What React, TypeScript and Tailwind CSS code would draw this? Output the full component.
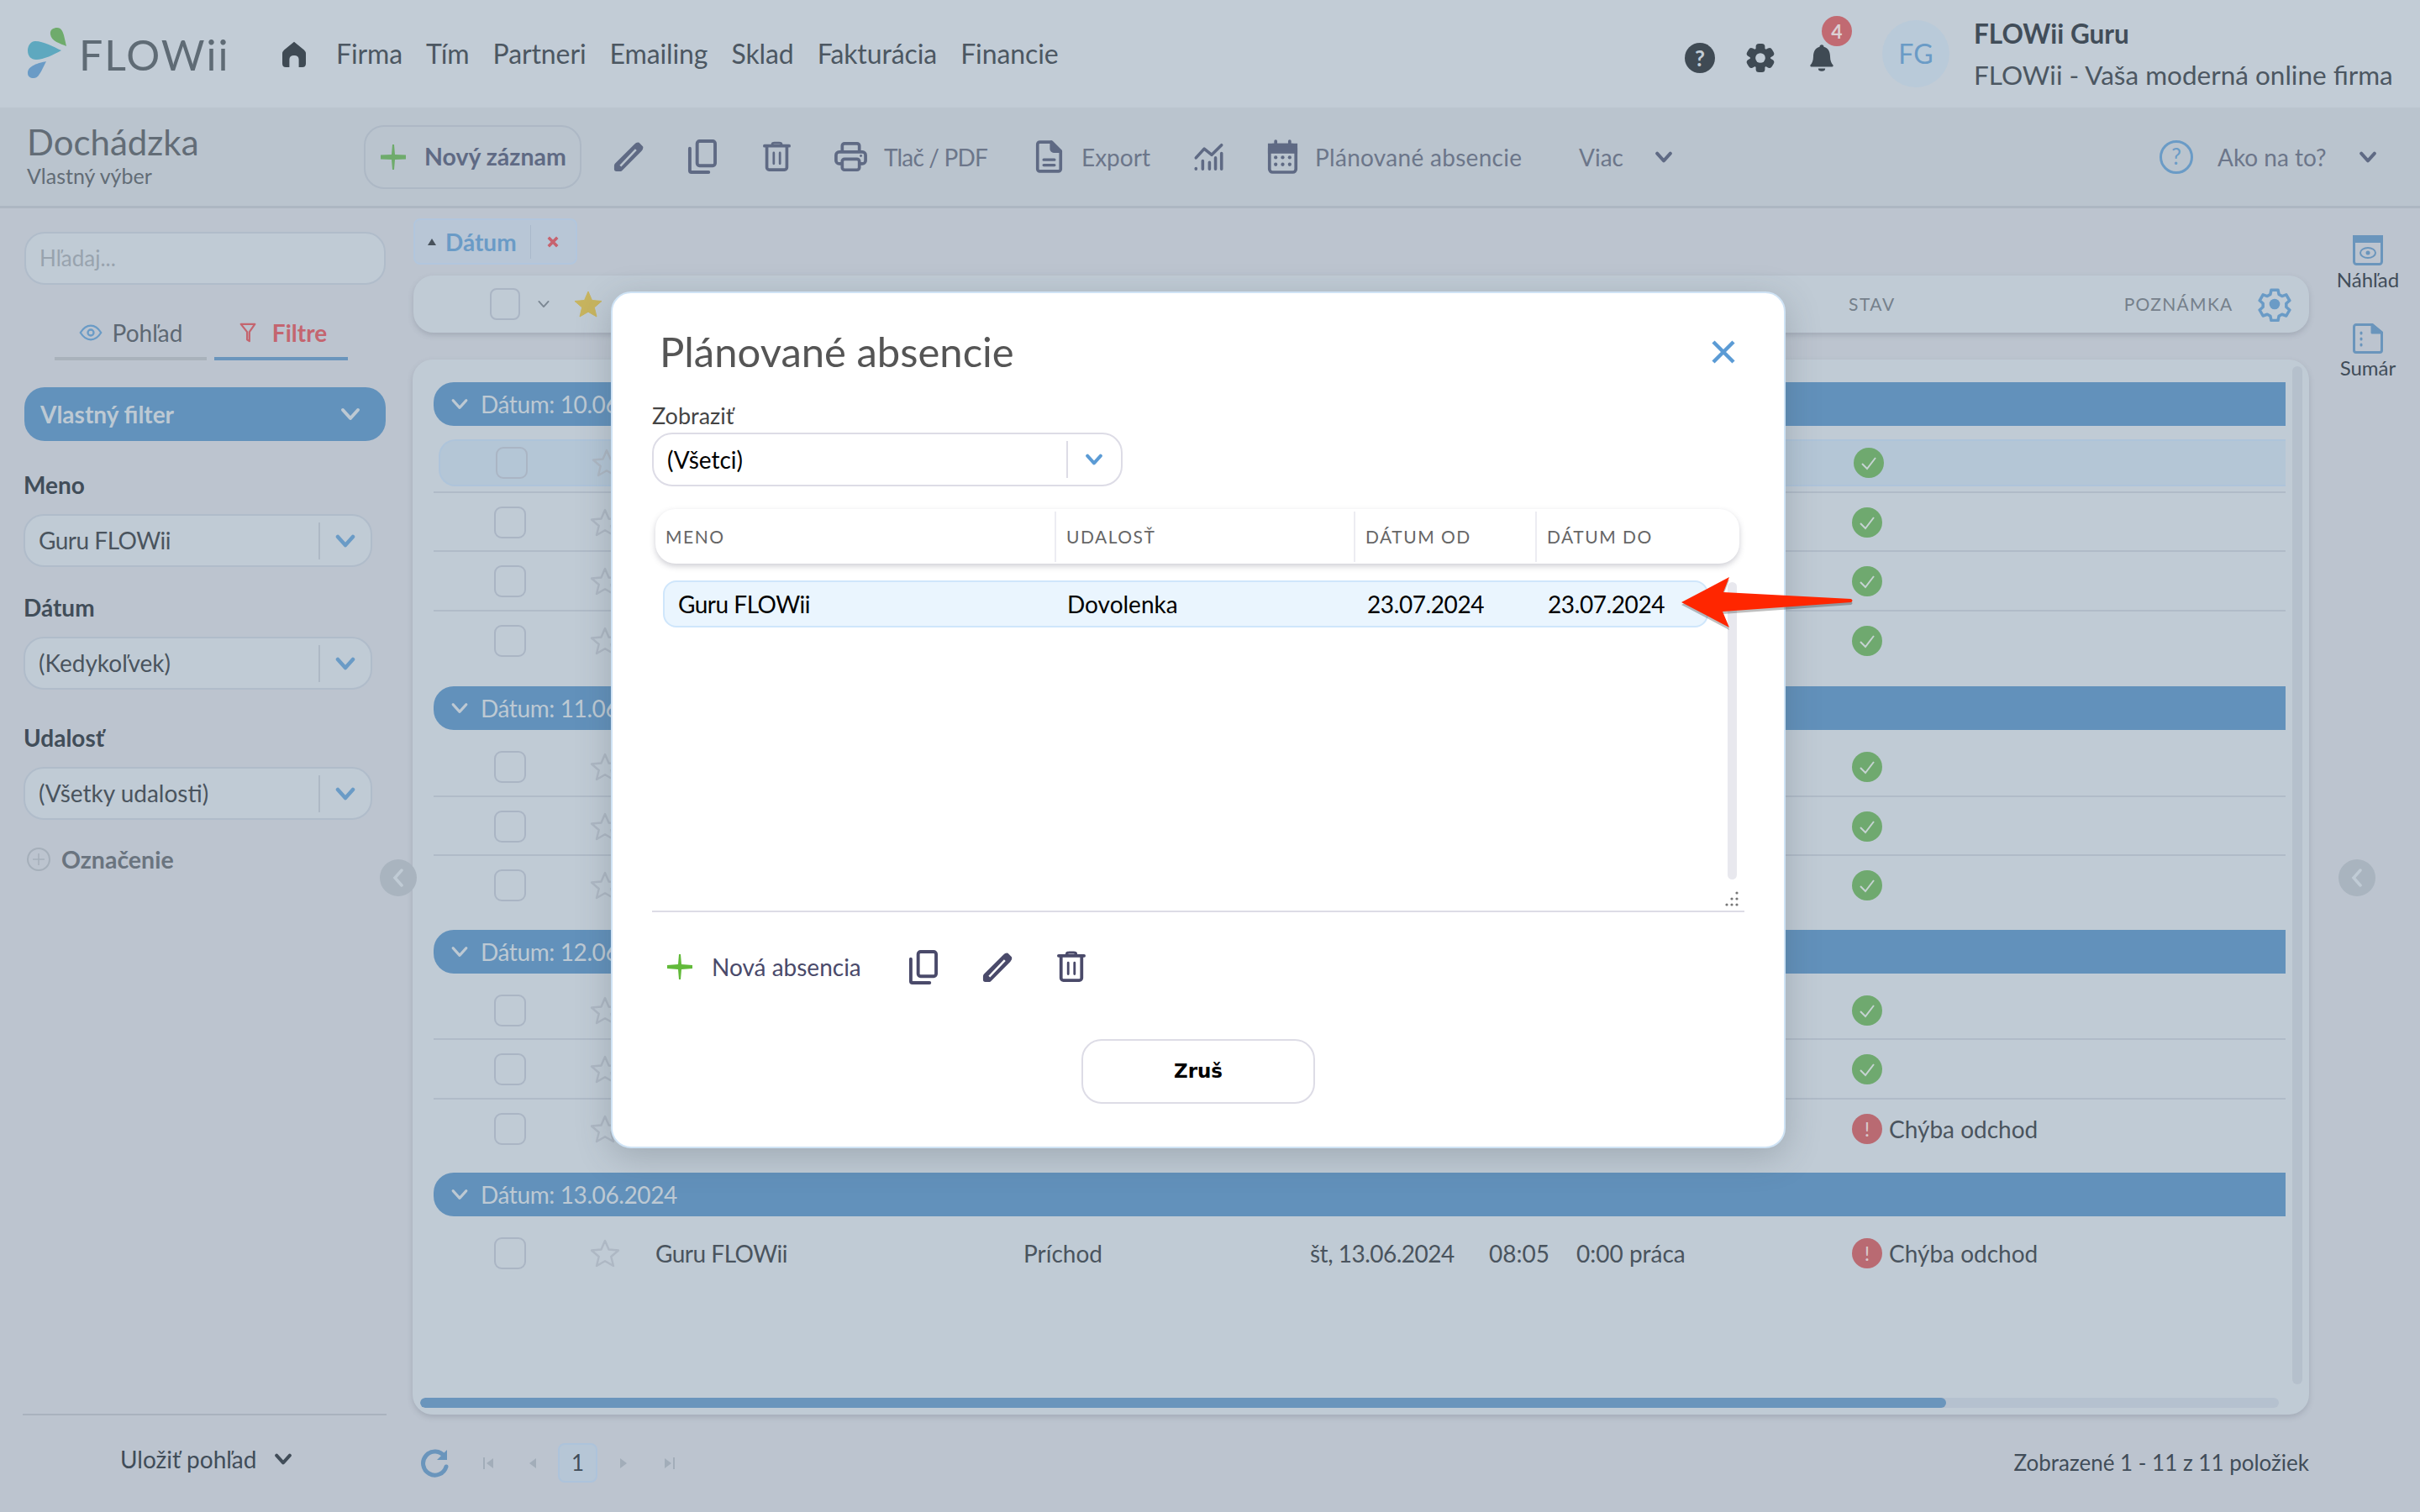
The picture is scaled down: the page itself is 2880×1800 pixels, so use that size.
import React from "react";

type C = { className?: string };

const Chevron = ({ className = "", sw = 4 }: C & { sw?: number }) => (
  <svg viewBox="0 0 24 16" className={className} fill="none" stroke="currentColor" strokeWidth={sw} strokeLinecap="round" strokeLinejoin="round">
    <path d="M3 3 L12 13 L21 3" />
  </svg>
);
const Pencil = ({ className }: C) => (
  <svg viewBox="0 0 40 40" className={className} fill="currentColor">
    <path fillRule="evenodd" d="M2 29 L27 4 Q30 1 33 2 L38 7 Q39 10 36 13 L11 38 Q10 39 8 39 L4 39 Q1 39 1 36 L1 32 Q1 30 2 29 Z M8 31 L10 33 L30 12 L28 10 Z" />
  </svg>
);
const Copy = ({ className }: C) => (
  <svg viewBox="0 0 36 42" className={className} fill="none" stroke="currentColor" strokeWidth="4" strokeLinecap="round" strokeLinejoin="round">
    <rect x="12" y="2" width="22" height="30" rx="3" />
    <path d="M3 11 V38 a2 2 0 0 0 2 2 H26" />
  </svg>
);
const Trash = ({ className }: C) => (
  <svg viewBox="0 0 36 40" className={className} fill="none" stroke="currentColor" strokeWidth="4" strokeLinecap="round" strokeLinejoin="round">
    <path d="M2 6 H34" />
    <path d="M12 4 q0 -2 3 -2 h6 q3 0 3 2" strokeWidth="3" />
    <path d="M5 7 V34 a3 3 0 0 0 3 3 H28 a3 3 0 0 0 3 -3 V7" />
    <path d="M14 15 V29 M22 15 V29" strokeWidth="3" />
  </svg>
);
const Printer = ({ className }: C) => (
  <svg viewBox="0 0 44 40" className={className} fill="none" stroke="currentColor" strokeWidth="4" strokeLinejoin="round">
    <path d="M11 14 V6 a3 3 0 0 1 3 -3 H30 a3 3 0 0 1 3 3 V14" />
    <path d="M10 29 H7 a4 4 0 0 1 -4 -4 V18 a4 4 0 0 1 4 -4 H37 a4 4 0 0 1 4 4 V25 a4 4 0 0 1 -4 4 H34" />
    <rect x="11" y="23" width="22" height="14" rx="3" />
    <circle cx="35" cy="19" r="1.6" fill="currentColor" stroke="none" />
  </svg>
);
const FileIcon = ({ className }: C) => (
  <svg viewBox="0 0 36 44" className={className} fill="none" stroke="currentColor" strokeWidth="4" strokeLinejoin="round" strokeLinecap="round">
    <path d="M3 6 a3 3 0 0 1 3 -3 H21 L33 15 V38 a3 3 0 0 1 -3 3 H6 a3 3 0 0 1 -3 -3 Z" />
    <path d="M21 3 V12 a3 3 0 0 0 3 3 H33 Z" fill="currentColor" />
    <path d="M11 26 H25 M11 33 H25" strokeWidth="3.5" />
  </svg>
);
const ChartIcon = ({ className }: C) => (
  <svg viewBox="0 0 40 38" className={className} fill="none" stroke="currentColor" strokeWidth="4" strokeLinecap="round" strokeLinejoin="round">
    <path d="M3 20 L14 8 L24 16 L37 3" />
    <path d="M3 34 V35 M12 24 V35 M21 26 V35 M29 20 V35 M37 14 V35" />
  </svg>
);
const Calendar = ({ className }: C) => (
  <svg viewBox="0 0 40 44" className={className} fill="none" stroke="currentColor" strokeWidth="4" strokeLinecap="round">
    <rect x="3" y="7" width="34" height="35" rx="4" />
    <rect x="3" y="7" width="34" height="9" fill="currentColor" />
    <path d="M11 2 V7 M29 2 V7" />
    <g fill="currentColor" stroke="none">
      <circle cx="11" cy="23" r="2.3" /><circle cx="20" cy="23" r="2.3" /><circle cx="29" cy="23" r="2.3" />
      <circle cx="11" cy="32" r="2.3" /><circle cx="20" cy="32" r="2.3" /><circle cx="29" cy="32" r="2.3" />
    </g>
  </svg>
);
const Plus = ({ className, thick = 4 }: C & { thick?: number }) => (
  <svg viewBox="0 0 30 30" className={className} fill="currentColor">
    <path d="M14 0 h2 l1 12 l13 1 v4 l-13 1 l-1 12 h-2 l-1 -12 l-13 -1 v-4 l13 -1 Z" />
    <rect x="0" y={15 - thick / 2} width="30" height={thick} />
  </svg>
);
const GearSolid = ({ className, hole = "#c2ccd6" }: C & { hole?: string }) => (
  <svg viewBox="0 0 40 40" className={className} fill="currentColor">
    {[0, 60, 120, 180, 240, 300].map((a) => (
      <rect key={a} x="14" y="1" width="12" height="12" rx="4" transform={`rotate(${a} 20 20)`} />
    ))}
    <circle cx="20" cy="20" r="13.5" />
    <circle cx="20" cy="20" r="6.5" fill={hole} />
  </svg>
);
const GearOutline = ({ className }: C) => (
  <svg viewBox="0 0 24 24" className={className} fill="none" stroke="currentColor" strokeWidth="2" strokeLinejoin="round">
    <path d="M9.7 2.4 h4.6 l.6 3 2.1 1.2 2.9 -1 2.3 4 -2.3 2 v2.4 l2.3 2 -2.3 4 -2.9 -1 -2.1 1.2 -.6 3 h-4.6 l-.6 -3 -2.1 -1.2 -2.9 1 -2.3 -4 2.3 -2 v-2.4 l-2.3 -2 2.3 -4 2.9 1 2.1 -1.2 Z" />
    <circle cx="12" cy="12" r="3.6" fill="currentColor" stroke="none" />
  </svg>
);
const Star = ({ className, solid }: C & { solid?: boolean }) => (
  <svg viewBox="0 0 36 36" className={className} fill={solid ? "currentColor" : "none"} stroke="currentColor" strokeWidth={solid ? 1 : 2.4} strokeLinejoin="round">
    <path d="M18 3 L22.5 13.5 L34 14.5 L25.3 22 L28 33 L18 27.2 L8 33 L10.7 22 L2 14.5 L13.5 13.5 Z" />
  </svg>
);
const Eye = ({ className }: C) => (
  <svg viewBox="0 0 32 24" className={className} fill="none" stroke="currentColor" strokeWidth="2.6">
    <path d="M2 12 C7 4 12 2.5 16 2.5 S25 4 30 12 C25 20 20 21.5 16 21.5 S7 20 2 12 Z" />
    <circle cx="16" cy="12" r="4" />
  </svg>
);

const Select = ({ value, className = "", text = "text-[#4a545e]" }: { value: string; className?: string; text?: string }) => (
  <div className={`flex items-center rounded-[24px] border-2 border-[#b0bcca] bg-[#c0cbd5] ${className}`}>
    <span className={`flex-1 pb-[2px] pl-[16px] text-[28px] ${text}`}>{value}</span>
    <span className="h-[44px] w-[2px] bg-[#aeb9c5]" />
    <Chevron className="ml-[18px] mr-[18px] h-[16px] w-[24px] text-[#6a9bc6]" sw={4.5} />
  </div>
);

const Check = () => (
  <span className="flex h-[36px] w-[36px] items-center justify-center rounded-full bg-[#6fa96f]">
    <svg viewBox="0 0 20 20" className="h-[20px] w-[20px]" fill="none" stroke="#c6d3d2" strokeWidth="2">
      <path d="M2 11 L8 17 L18 4" />
    </svg>
  </span>
);
const Warn = () => (
  <span className="flex h-[36px] w-[36px] items-center justify-center rounded-full bg-[#b96a72] text-[24px] leading-none text-[#d8c8cc]">!</span>
);

type Row = { hl?: boolean; s: "ok" | "err"; full?: boolean };
const groups: { date: string; mt: string; rows: Row[] }[] = [
  { date: "10.06", mt: "mt-[27px]", rows: [{ hl: true, s: "ok" }, { s: "ok" }, { s: "ok" }, { s: "ok" }] },
  { date: "11.06", mt: "mt-[19px]", rows: [{ s: "ok" }, { s: "ok" }, { s: "ok" }] },
  { date: "12.06", mt: "mt-[17px]", rows: [{ s: "ok" }, { s: "ok" }, { s: "err" }] },
  { date: "13.06.2024", mt: "mt-[17px]", rows: [{ s: "err", full: true }] },
];

const RowView = ({ row, last }: { row: Row; last: boolean }) => (
  <div className={`h-[70.5px] py-[7px] ${last ? "" : "border-b-2 border-[#b0bbc8]"}`}>
    <div className={`ml-[6px] flex h-[56px] items-center text-[28px] text-[#4a545e] ${row.hl ? "rounded-l-[20px] border-y-2 border-l-2 border-[#aec4da] bg-[#b4c6d6]" : ""}`}>
      <span className="ml-[66px] h-[38px] w-[38px] shrink-0 rounded-[9px] border-2 border-[#aab5c4]" />
      <Star className="ml-[76px] h-[36px] w-[36px] shrink-0 text-[#aeb8c4]" />
      <span className="ml-[42px] w-[438px] shrink-0 tracking-[-0.5px]">{row.full ? "Guru FLOWii" : ""}</span>
      <span className="w-[341px] shrink-0">{row.full ? "Príchod" : ""}</span>
      <span className="w-[213px] shrink-0 tracking-[-0.5px]">{row.full ? "št, 13.06.2024" : ""}</span>
      <span className="w-[104px] shrink-0">{row.full ? "08:05" : ""}</span>
      <span className="w-[328px] shrink-0">{row.full ? "0:00 práca" : ""}</span>
      {row.s === "ok" ? <Check /> : <Warn />}
      {row.s === "err" && <span className="ml-[8px]">Chýba odchod</span>}
    </div>
  </div>
);

const Sidebar = () => (
  <aside className="flex w-[491px] shrink-0 flex-col pl-[28px]">
    <div className="ml-px mt-[28px] flex h-[63px] w-[430px] items-center rounded-[24px] border-2 border-[#b0bcca] bg-[#c0cbd5] pl-[16px] text-[26px] text-[#98a3ae]">Hľadaj...</div>
    <div className="mt-[32px] flex">
      <div className="ml-[37px] flex h-[58px] w-[181px] items-center justify-center gap-[12px] border-b-4 border-[#a9b2bb] pb-[4px] text-[28px] text-[#5d6873]">
        <Eye className="h-[22px] w-[28px] text-[#6a9bc6]" />Pohľad
      </div>
      <div className="ml-[9px] flex h-[58px] w-[159px] items-center justify-center gap-[19px] border-b-4 border-[#6a95bc] pb-[4px] pl-[5px] text-[28px] font-bold text-[#c4656f]">
        <svg viewBox="0 0 20 26" className="h-[24px] w-[20px]" fill="none" stroke="currentColor" strokeWidth="2.4" strokeLinejoin="round"><path d="M1 2 H19 L12 12 V24 L9 22 V12 Z" /></svg>
        Filtre
      </div>
    </div>
    <div className="ml-px mt-[32px] flex h-[64px] w-[430px] items-center justify-between rounded-[24px] bg-[#6292bc] pl-[19px] pr-[30px] text-[28px] font-bold text-[#bdc9d3]">
      Vlastný filter<Chevron className="h-[16px] w-[24px]" sw={4} />
    </div>
    <div className="mt-[36px] h-[32px] text-[28px] font-bold leading-[32px] text-[#414d59]">Meno</div>
    <Select value="Guru FLOWii" className="mt-[19px] h-[63px] w-[415px] tracking-[-0.5px]" />
    <div className="mt-[32px] h-[32px] text-[28px] font-bold leading-[32px] text-[#414d59]">Dátum</div>
    <Select value="(Kedykoľvek)" className="mt-[19px] h-[63px] w-[415px]" />
    <div className="mt-[41px] h-[32px] text-[28px] font-bold leading-[32px] text-[#414d59]">Udalosť</div>
    <Select value="(Všetky udalosti)" className="mt-[19px] h-[63px] w-[415px]" />
    <div className="mt-[31px] flex h-[32px] items-center text-[28.5px] font-bold text-[#6a747f]">
      <span className="ml-[4px] flex h-[28px] w-[28px] items-center justify-center rounded-full border-2 border-[#a5afba] text-[#a5afba]">
        <svg viewBox="0 0 16 16" className="h-[16px] w-[16px]" stroke="currentColor" strokeWidth="1.5"><path d="M8 1 V15 M1 8 H15" /></svg>
      </span>
      <span className="ml-[13px]">Označenie</span>
    </div>
    <div className="ml-[-1px] mt-auto h-[2px] w-[433px] bg-[#a9b2be]" />
    <div className="flex h-[115px] items-center pb-[11px] pl-[115px] text-[28px] text-[#414d59]">
      Uložiť pohľad
      <Chevron className="ml-[21px] h-[14px] w-[22px]" sw={4.5} />
    </div>
  </aside>
);

const Content = () => (
  <section className="flex w-[2257px] shrink-0 flex-col">
    <div className="ml-px mt-[12px] flex h-[55px] w-[195px] items-center rounded-[8px] border-2 border-[#b2c6dd] bg-[#b8c6d6]">
      <svg viewBox="0 0 10 8" className="ml-[14px] h-[8px] w-[12px]" fill="#48525c"><path d="M5 0 L10 8 H0 Z" /></svg>
      <span className="ml-[10px] text-[28px] font-bold text-[#6a9bc6]">Dátum</span>
      <span className="ml-[16px] h-[40px] w-[1px] bg-[#a9b9cb]" />
      <svg viewBox="0 0 12 12" className="ml-[19px] h-[14px] w-[14px]" stroke="#c7626e" strokeWidth="3"><path d="M1.5 1.5 L10.5 10.5 M10.5 1.5 L1.5 10.5" /></svg>
    </div>
    <div className="ml-px mt-[13px] flex h-[68px] items-center rounded-[24px] bg-[#c0cbd5] shadow-[0_3px_6px_rgba(90,100,115,0.25)]">
      <span className="ml-[91px] h-[38px] w-[36px] rounded-[8px] border-2 border-[#aab5c4]" />
      <Chevron className="ml-[20px] h-[10px] w-[16px] text-[#7b8793]" sw={3} />
      <Star solid className="ml-[27px] h-[36px] w-[36px] text-[#c7b45f]" />
      <span className="ml-[1482px] text-[21px] tracking-[1.5px] text-[#75808b]">STAV</span>
      <span className="ml-[272px] text-[21px] tracking-[1.3px] text-[#75808b]">POZNÁMKA</span>
      <GearOutline className="ml-[28px] h-[42px] w-[42px] text-[#6a9bc6]" />
    </div>
    <div className="relative mt-[32px] h-[1256px] rounded-[24px] bg-[#c0cbd5] pl-[25px] pr-[28px] shadow-[0_3px_6px_rgba(90,100,115,0.25)]">
      {groups.map((g) => (
        <div key={g.date} className={g.mt}>
          <div className="flex h-[52px] items-center rounded-l-[24px] bg-[#6291bb] text-[28px] tracking-[-0.4px] text-[#bdc9d3]">
            <Chevron className="ml-[20px] h-[14px] w-[22px]" sw={3.5} />
            <span className="ml-[14px] whitespace-nowrap">Dátum: {g.date}</span>
          </div>
          <div className="pt-[9px]">
            {g.rows.map((r, i) => (
              <RowView key={i} row={r} last={i === g.rows.length - 1} />
            ))}
          </div>
        </div>
      ))}
      <div className="absolute right-[8px] top-[8px] h-[1212px] w-[12px] rounded-full bg-[#b5c0cc]" />
      <div className="absolute bottom-[8px] left-[9px] h-[12px] w-[2212px] overflow-hidden rounded-full bg-[#b5c1cf]">
        <div className="h-full w-[1816px] rounded-full bg-[#6a95bc]" />
      </div>
    </div>
    <div className="flex h-[116px] items-center pb-[1px] text-[26px] text-[#414d59]">
      <svg viewBox="0 0 36 36" className="ml-[8px] h-[36px] w-[36px] text-[#6a95bc]" fill="none" stroke="currentColor" strokeWidth="5">
        <path d="M30 10 A14 14 0 1 0 32 22" strokeLinecap="round" />
        <path d="M33 2 V14 H21 Z" fill="currentColor" stroke="none" />
      </svg>
      <svg viewBox="0 0 12 14" className="ml-[40px] h-[14px] w-[12px]" fill="#a2adb9"><path d="M0 0 H2 V14 H0 Z M12 1 V13 L4 7 Z" /></svg>
      <svg viewBox="0 0 8 14" className="ml-[43px] h-[14px] w-[8px]" fill="#a2adb9"><path d="M8 1 V13 L0 7 Z" /></svg>
      <span className="ml-[26px] flex h-[47px] w-[47px] items-center justify-center rounded-[8px] border-2 border-[#adc3db] bg-[#b6c6d6]">1</span>
      <svg viewBox="0 0 8 14" className="ml-[27px] h-[14px] w-[8px]" fill="#a2adb9"><path d="M0 1 V13 L8 7 Z" /></svg>
      <svg viewBox="0 0 12 14" className="ml-[45px] h-[14px] w-[12px]" fill="#a2adb9"><path d="M0 1 V13 L8 7 Z M10 0 H12 V14 H10 Z" /></svg>
      <span className="ml-auto">Zobrazené 1 - 11 z 11 položiek</span>
    </div>
  </section>
);

const ToolLabel = ({ children, className = "" }: { children: React.ReactNode; className?: string }) => (
  <span className={`whitespace-nowrap text-[28px] text-[#6c768a] ${className}`}>{children}</span>
);

const Modal = () => (
  <div className="absolute left-[727px] top-[347px] flex h-[1020px] w-[1398px] flex-col rounded-[24px] border-2 border-[#cfe3f5] bg-white px-[47px] shadow-[0_10px_40px_rgba(60,70,80,0.25)]">
    <div className="mt-[45px] flex h-[50px] items-center justify-between">
      <span className="ml-[9px] text-[49px] text-[#555555]">Plánované absencie</span>
      <svg viewBox="0 0 30 30" className="mr-[10px] h-[30px] w-[30px] text-[#5b9bd5]" stroke="currentColor" strokeWidth="4.5"><path d="M3 3 L27 27 M27 3 L3 27" /></svg>
    </div>
    <div className="mt-[35px] h-[32px] text-[27px] leading-[32px] text-[#444444]">Zobraziť</div>
    <div className="mt-[4px] flex h-[64px] w-[560px] items-center rounded-[24px] border-2 border-[#dddce6]">
      <span className="flex-1 pb-[1px] pl-[16px] text-[28px] text-black">(Všetci)</span>
      <span className="h-[44px] w-[2px] bg-[#dddce6]" />
      <Chevron className="ml-[19px] mr-[20px] h-[14px] w-[24px] text-[#5b9bd5]" sw={4.5} />
    </div>
    <div className="relative mt-[27px] h-[480px] w-[1300px] border-b-2 border-[#dddce6]">
      <div className="ml-[4px] flex h-[65px] w-[1290px] items-center rounded-[24px] bg-white text-[21px] tracking-[1.5px] text-[#666666] shadow-[0_3px_7px_rgba(80,80,100,0.28)]">
        <span className="flex h-[60px] w-[477px] items-center border-r-2 border-[#ececf2] pl-[12px]">MENO</span>
        <span className="flex h-[60px] w-[356px] items-center border-r-2 border-[#ececf2] pl-[12px]">UDALOSŤ</span>
        <span className="flex h-[60px] w-[216px] items-center border-r-2 border-[#ececf2] pl-[12px]">DÁTUM OD</span>
        <span className="pl-[12px]">DÁTUM DO</span>
      </div>
      <div className="ml-[13px] mt-[20px] flex h-[56px] w-[1244px] items-center rounded-[16px] border-2 border-[#cfe6fb] bg-[#eaf5fe] text-[28px] text-black">
        <span className="w-[479px] pl-[16px] tracking-[-0.5px]">Guru FLOWii</span>
        <span className="w-[357px]">Dovolenka</span>
        <span className="w-[215px] tracking-[-0.4px]">23.07.2024</span>
        <span className="tracking-[-0.4px]">23.07.2024</span>
      </div>
      <div className="absolute left-[1280px] top-[87px] h-[354px] w-[11px] rounded-full bg-[#e8e8ee]" />
      <svg viewBox="0 0 20 20" className="absolute left-[1274px] top-[454px] h-[20px] w-[20px]" fill="#777777">
        <circle cx="17" cy="3" r="1.6" /><circle cx="11" cy="10" r="1.6" /><circle cx="17" cy="10" r="1.6" />
        <circle cx="5" cy="17" r="1.6" /><circle cx="11" cy="17" r="1.6" /><circle cx="17" cy="17" r="1.6" />
      </svg>
    </div>
    <div className="mt-[33px] flex h-[64px] items-center text-[#4a4a6a]">
      <Plus className="ml-[18px] h-[30px] w-[30px] text-[#62ba3a]" thick={4} />
      <span className="ml-[23px] w-[181px] text-[28px]">Nová absencia</span>
      <Copy className="ml-[53px] h-[41px] w-[35px]" />
      <Pencil className="ml-[53px] h-[37px] w-[37px]" />
      <Trash className="ml-[52px] h-[38px] w-[34px]" />
    </div>
    <div className="mt-[54px] flex h-[77px] w-[278px] items-center justify-center self-center rounded-[24px] border-2 border-[#dddce6] font-[family-name:'DejaVu_Sans',sans-serif] text-[23px] font-bold text-black">Zruš</div>
  </div>
);

export default function App() {
  return (
    <div className="relative flex h-[1800px] w-[2880px] flex-col overflow-hidden bg-[#bcc4cf] font-[family-name:Lato,sans-serif]">
      <header className="flex h-[128px] shrink-0 items-center bg-[#c2ccd6]">
        <svg viewBox="0 0 50 62" className="ml-[32px] mt-[-2px] h-[62px] w-[50px]">
          <path fill="#6fab6c" d="M47 23 C40 20 29 17 28 9 C27 3 32 1 36 1 C41 1 43 6 44 10 Z" />
          <path fill="#5ea8bf" d="M41 28 C32 24 20 17 10 17 C4 17 1 23 1 28 C1 35 5 39 11 39 C20 39 32 33 41 28Z" />
          <path fill="#6a9bc6" d="M23 41 C14 43 1 46 1 55 C1 59 4 61 8 61 C13 61 15 56 17 53 Z" />
        </svg>
        <span className="ml-[12px] mt-[2px] w-[242px] text-[50px] leading-none tracking-[2px] text-[#5f6b75]">FLOWii</span>
        <svg viewBox="0 0 40 44" className="h-[31px] w-[28px] text-[#3f4a54]" fill="currentColor">
          <path d="M20 1 L37 15 Q40 18 40 21 V38 Q40 44 34 44 H28 V31 Q28 24 20 24 Q12 24 12 31 V44 H6 Q0 44 0 38 V21 Q0 18 3 15 Z" />
        </svg>
        <nav className="ml-[36px] flex gap-[28px] text-[32px] tracking-[-0.1px] text-[#4c5762]">
          <span>Firma</span><span>Tím</span><span>Partneri</span><span>Emailing</span><span>Sklad</span><span>Fakturácia</span><span>Financie</span>
        </nav>
        <div className="ml-auto flex items-center">
          <span className="mt-[10px] flex h-[36px] w-[36px] items-center justify-center rounded-full bg-[#3f4a54] text-[26px] font-bold text-[#c2ccd6]">?</span>
          <GearSolid className="ml-[36px] mt-[10px] h-[36px] w-[36px] text-[#3f4a54]" />
          <div className="relative ml-[40px] mt-[10px] h-[38px] w-[30px]">
            <svg viewBox="0 0 36 40" className="h-[38px] w-[30px] text-[#3f4a54]" fill="currentColor">
              <path d="M18 1 a3 3 0 0 1 3 3 c7 2 9 8 9 14 c0 6 2 10 4 12 a1.5 1.5 0 0 1 -1 2.5 H3 a1.5 1.5 0 0 1 -1 -2.5 c2 -2 4 -6 4 -12 c0 -6 2 -12 9 -14 a3 3 0 0 1 3 -3 Z M13 35 h10 a5 4 0 0 1 -10 0 Z" />
            </svg>
            <span className="absolute left-[15px] top-[-31px] flex h-[36px] w-[36px] items-center justify-center rounded-full bg-[#c16a72] text-[23px] font-bold text-[#dcd0d4]">4</span>
          </div>
          <span className="ml-[57px] flex h-[80px] w-[80px] items-center justify-center rounded-full bg-[#b9cad9] text-[32px] text-[#6a9bc6]">FG</span>
          <div className="ml-[29px] mr-[30px] flex w-[501px] flex-col gap-[13px] text-[31.5px] leading-[36px]">
            <span className="font-bold text-[#414d59]">FLOWii Guru</span>
            <span className="whitespace-nowrap text-[#4c5762]">FLOWii - Vaša moderná online firma</span>
          </div>
        </div>
      </header>

      <div className="flex h-[120px] shrink-0 items-center border-b-[3px] border-[#adb7c2] bg-[#bac4ce]">
        <div className="ml-[32px] flex w-[401px] flex-col pb-[5px]">
          <span className="text-[42px] leading-[50px] text-[#626c76]">Dochádzka</span>
          <span className="text-[25px] leading-[30px] text-[#626c76]">Vlastný výber</span>
        </div>
        <div className="flex h-[76px] w-[259px] items-center rounded-[24px] border-2 border-[#adb8c5] bg-[#bac4ce] text-[28.5px] font-bold text-[#5f6a84]">
          <Plus className="ml-[18px] h-[30px] w-[30px] text-[#6fab6c]" thick={5} />
          <span className="ml-[22px] whitespace-nowrap">Nový záznam</span>
        </div>
        <div className="flex items-center text-[#5f6a84]">
          <Pencil className="ml-[38px] h-[37px] w-[37px]" />
          <Copy className="ml-[51px] h-[41px] w-[35px]" />
          <Trash className="ml-[55px] h-[37px] w-[33px]" />
          <Printer className="ml-[51px] h-[37px] w-[41px]" />
          <ToolLabel className="ml-[19px] w-[125px] tracking-[-0.8px]">Tlač / PDF</ToolLabel>
          <FileIcon className="ml-[55px] h-[41px] w-[33px]" />
          <ToolLabel className="ml-[22px] w-[80px]">Export</ToolLabel>
          <ChartIcon className="ml-[53px] h-[34px] w-[37px]" />
          <Calendar className="ml-[51px] h-[41px] w-[37px]" />
          <ToolLabel className="ml-[20px] w-[247px] tracking-[0.3px]">Plánované absencie</ToolLabel>
          <ToolLabel className="ml-[67px] w-[53px]">Viac</ToolLabel>
          <Chevron className="ml-[37px] h-[14px] w-[22px]" sw={4.5} />
        </div>
        <div className="ml-auto mr-[51px] flex items-center">
          <span className="flex h-[40px] w-[40px] items-center justify-center rounded-full border-[3px] border-[#6a9bc6] text-[26px] text-[#6a9bc6]">?</span>
          <ToolLabel className="ml-[29px] w-[131px]">Ako na to?</ToolLabel>
          <Chevron className="ml-[37px] h-[14px] w-[22px] text-[#5f6a84]" sw={4.5} />
        </div>
      </div>

      <main className="flex flex-1">
        <Sidebar />
        <Content />
        <aside className="flex w-[132px] flex-col items-center pl-[8px] pt-[32px] text-[24px] text-[#414d59]">
          <svg viewBox="0 0 36 36" className="h-[36px] w-[36px] text-[#6a95bc]" fill="none" stroke="currentColor" strokeWidth="3">
            <rect x="1.5" y="1.5" width="33" height="33" rx="3" />
            <rect x="1.5" y="1.5" width="33" height="6" fill="currentColor" />
            <ellipse cx="18" cy="21" rx="9" ry="6" strokeWidth="2" />
            <circle cx="18" cy="21" r="2.5" fill="currentColor" stroke="none" />
          </svg>
          <span className="mt-[2px] leading-[30px]">Náhľad</span>
          <svg viewBox="0 0 36 36" className="mt-[37px] h-[36px] w-[36px] text-[#6a95bc]" fill="none" stroke="currentColor" strokeWidth="3" strokeLinejoin="round">
            <path d="M1.5 4 a2.5 2.5 0 0 1 2.5 -2.5 H23 L34.5 11 V32 a2.5 2.5 0 0 1 -2.5 2.5 H4 a2.5 2.5 0 0 1 -2.5 -2.5 Z" />
            <path d="M23 1.5 V11 H34.5 Z" fill="currentColor" />
            <path d="M10 11 V12 M10 18 V19 M10 25 V26" strokeLinecap="round" />
          </svg>
          <span className="mt-[2px] leading-[30px]">Sumár</span>
        </aside>
      </main>

      <span className="absolute left-[452px] top-[1023px] flex h-[44px] w-[44px] items-center justify-center rounded-full bg-[#a9b4bf] text-[#c0cbd5]">
        <svg viewBox="0 0 14 22" className="h-[22px] w-[14px]" fill="none" stroke="currentColor" strokeWidth="3.5" strokeLinecap="round"><path d="M11 2 L3 11 L11 20" /></svg>
      </span>
      <span className="absolute left-[2783px] top-[1023px] flex h-[44px] w-[44px] items-center justify-center rounded-full bg-[#a9b4bf] text-[#c0cbd5]">
        <svg viewBox="0 0 14 22" className="h-[22px] w-[14px]" fill="none" stroke="currentColor" strokeWidth="3.5" strokeLinecap="round"><path d="M11 2 L3 11 L11 20" /></svg>
      </span>

      <Modal />

      <svg viewBox="0 0 210 70" className="absolute left-[1998px] top-[682px] h-[70px] w-[210px]">
        <path fill="#00000040" transform="translate(0 3)" d="M3 35 L60 5 L53 23 L205 31 Q208 33 205 35 L52 46 L60 65 Z" />
        <path fill="#ff2600" d="M3 35 L60 5 L53 23 L205 31 Q208 33 205 35 L52 46 L60 65 Z" />
      </svg>
    </div>
  );
}
